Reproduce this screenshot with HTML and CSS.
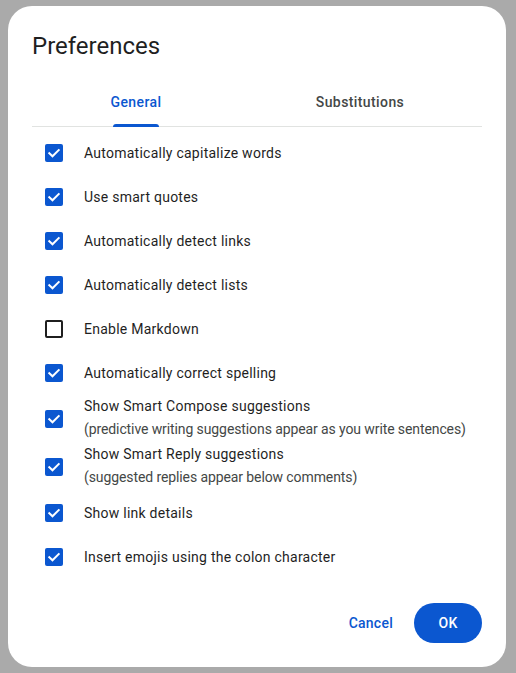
FILE: index.html
```html
<!DOCTYPE html>
<html lang="en">
<head>
<meta charset="utf-8">
<title>Preferences</title>
<link rel="stylesheet" href="styles.css">
</head>
<body>
<div class="dialog">
  <h1 class="title">Preferences</h1>
  <div class="tabs">
    <div class="tab active"><span class="tab-label">General</span></div>
    <div class="tab"><span class="tab-label">Substitutions</span></div>
  </div>
  <ul class="options">
    <li class="option"><span class="box checked"><svg viewBox="0 0 18 18"><path d="M4.3 9.2 L7.5 12.3 L13.7 6.1"/></svg></span><span class="label">Automatically capitalize words</span></li>
    <li class="option"><span class="box checked"><svg viewBox="0 0 18 18"><path d="M4.3 9.2 L7.5 12.3 L13.7 6.1"/></svg></span><span class="label">Use smart quotes</span></li>
    <li class="option"><span class="box checked"><svg viewBox="0 0 18 18"><path d="M4.3 9.2 L7.5 12.3 L13.7 6.1"/></svg></span><span class="label">Automatically detect links</span></li>
    <li class="option"><span class="box checked"><svg viewBox="0 0 18 18"><path d="M4.3 9.2 L7.5 12.3 L13.7 6.1"/></svg></span><span class="label">Automatically detect lists</span></li>
    <li class="option"><span class="box"></span><span class="label">Enable Markdown</span></li>
    <li class="option"><span class="box checked"><svg viewBox="0 0 18 18"><path d="M4.3 9.2 L7.5 12.3 L13.7 6.1"/></svg></span><span class="label">Automatically correct spelling</span></li>
    <li class="option double"><span class="box checked"><svg viewBox="0 0 18 18"><path d="M4.3 9.2 L7.5 12.3 L13.7 6.1"/></svg></span><span class="label-group"><span class="label">Show Smart Compose suggestions</span><span class="sub">(predictive writing suggestions appear as you write sentences)</span></span></li>
    <li class="option double"><span class="box checked"><svg viewBox="0 0 18 18"><path d="M4.3 9.2 L7.5 12.3 L13.7 6.1"/></svg></span><span class="label-group"><span class="label">Show Smart Reply suggestions</span><span class="sub">(suggested replies appear below comments)</span></span></li>
    <li class="option"><span class="box checked"><svg viewBox="0 0 18 18"><path d="M4.3 9.2 L7.5 12.3 L13.7 6.1"/></svg></span><span class="label">Show link details</span></li>
    <li class="option"><span class="box checked"><svg viewBox="0 0 18 18"><path d="M4.3 9.2 L7.5 12.3 L13.7 6.1"/></svg></span><span class="label">Insert emojis using the colon character</span></li>
  </ul>
  <div class="actions">
    <button class="btn btn-text">Cancel</button>
    <button class="btn btn-filled">OK</button>
  </div>
</div>
</body>
</html>
```
FILE: styles.css
```css
html, body {
  margin: 0;
  padding: 0;
}
body {
  background: #aaaaaa;
  font-family: Roboto, "Noto Sans", Arial, sans-serif;
  color: #1f1f1f;
  width: 516px;
  height: 673px;
  overflow: hidden;
}
.dialog {
  margin: 6px 0 0 8px;
  width: 498px;
  box-sizing: border-box;
  background: #ffffff;
  border-radius: 24px;
  padding: 24px 24px 24px 24px;
}
.title {
  margin: 0;
  font-size: 24px;
  line-height: 32px;
  font-weight: 400;
  color: #1f1f1f;
}
.tabs {
  margin-top: 16px;
  display: flex;
  border-bottom: 1px solid #e1e3e1;
}
.tab {
  width: 224px;
  height: 48px;
  display: flex;
  justify-content: center;
  align-items: stretch;
  font-size: 14px;
  font-weight: 500;
  letter-spacing: 0.4px;
  color: #444746;
}
.tab:first-child {
  margin-left: -8px;
}
.tab-label {
  display: flex;
  align-items: center;
  line-height: 20px;
  position: relative;
}
.tab.active .tab-label {
  color: #0b57d0;
}
.tab.active .tab-label::after {
  content: "";
  position: absolute;
  left: 2px;
  right: 2px;
  bottom: -1px;
  height: 3px;
  background: #0b57d0;
  border-radius: 3px 3px 0 0;
}
.options {
  list-style: none;
  margin: 4px 0 0 0;
  padding: 0;
}
.option {
  height: 44px;
  display: flex;
  align-items: center;
  padding-left: 13px;
  font-size: 14px;
  line-height: 20px;
}
.option.double {
  height: 48px;
}
.box {
  width: 18px;
  height: 18px;
  box-sizing: border-box;
  border: 2px solid #1f1f1f;
  border-radius: 2px;
  flex: 0 0 auto;
  margin-right: 21px;
  display: flex;
}
.box.checked {
  border: none;
  background: #0b57d0;
}
.box svg {
  width: 18px;
  height: 18px;
}
.box svg path {
  fill: none;
  stroke: #ffffff;
  stroke-width: 2;
  stroke-linecap: square;
}
.label {
  letter-spacing: 0.25px;
}
.label-group {
  display: flex;
  flex-direction: column;
  padding-bottom: 4px;
}
.sub {
  margin-top: 3px;
  color: #444746;
  letter-spacing: -0.1px;
}
.actions {
  margin-top: 24px;
  display: flex;
  justify-content: flex-end;
  gap: 9px;
}
.btn {
  height: 40px;
  border: none;
  border-radius: 20px;
  font-family: Roboto, "Noto Sans", Arial, sans-serif;
  font-size: 14px;
  font-weight: 500;
  letter-spacing: 0.25px;
  cursor: pointer;
}
.btn-text {
  background: transparent;
  color: #0b57d0;
  padding: 0 12px;
}
.btn-filled {
  background: #0b57d0;
  color: #ffffff;
  width: 68px;
  padding: 0;
}
```
